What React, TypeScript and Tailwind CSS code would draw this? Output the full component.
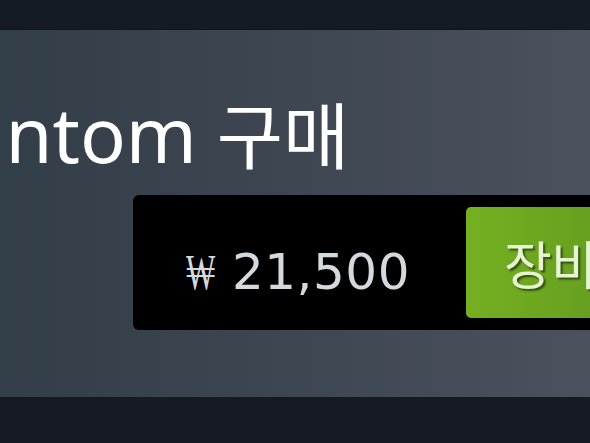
export default function App() {
  return (
    <div className="w-[590px] h-[443px] overflow-hidden bg-[#151b24] flex flex-col">
      {/* top strip */}
      <div className="h-[30px] shrink-0 bg-[#151b24] border-b border-[#10151c]" />

      {/* purchase panel */}
      <div className="h-[367px] shrink-0 overflow-hidden bg-gradient-to-r from-[#323e48] via-[#3e4651] to-[#4b525d] flex flex-col">
        <h1 className="mt-[57px] -ml-[285px] h-[90px] whitespace-nowrap text-white text-[76px] leading-[90px] font-['Noto_Sans','Noto_Sans_CJK_KR',sans-serif]">
          Buy Phantom <span className="font-['Noto_Sans_CJK_KR',sans-serif] text-[72px]">구매</span>
        </h1>

        <div className="mt-[18px] ml-[133px] h-[135px] w-[600px] shrink-0 rounded-l-md bg-black flex items-center">
          <div className="ml-[53px] pt-[18px] flex items-baseline text-[#d4d9de]">
            <span className="inline-block w-[46px] origin-left scale-x-[0.62] text-[50px] leading-none font-['DejaVu_Serif',serif]">₩</span>
            <span className="text-[50px] leading-none tracking-[0.5px] font-['DejaVu_Sans',sans-serif]">21,500</span>
          </div>
          <button className="ml-[56px] h-[111px] w-[200px] shrink-0 rounded-[5px] bg-gradient-to-r from-[#75b022] to-[#5f961d] pl-[38px] text-left text-[#e6f4d2] text-[52px] font-['Noto_Sans_CJK_KR',sans-serif] [text-shadow:2px_2px_2px_rgba(30,50,10,0.75)] whitespace-nowrap">
            장바구니
          </button>
        </div>
      </div>

      {/* bottom strip */}
      <div className="flex-1 bg-[#151a23]" />
    </div>
  );
}
